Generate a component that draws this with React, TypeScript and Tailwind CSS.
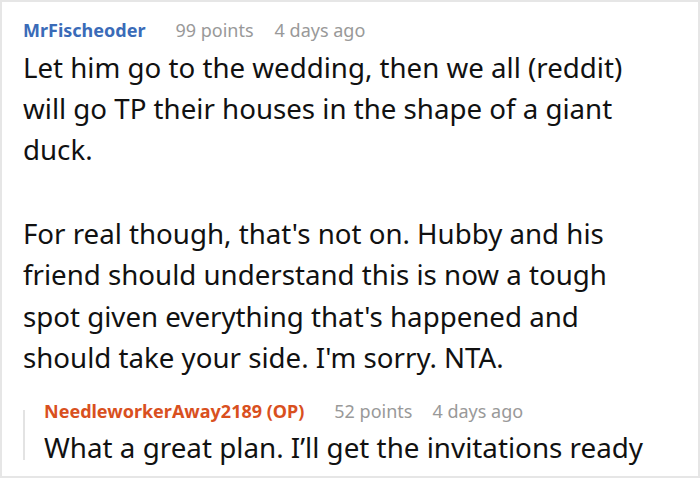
const firstParagraph = [
  'Let him go to the wedding, then we all (reddit)',
  'will go TP their houses in the shape of a giant',
  'duck.',
];

const secondParagraph = [
  'For real though, that\'s not on. Hubby and his',
  'friend should understand this is now a tough',
  'spot given everything that\'s happened and',
  'should take your side. I\'m sorry. NTA.',
];

export default function App() {
  return (
    <div
      className="w-[700px] h-[478px] overflow-hidden bg-white border-2 border-[#e6e6e6] pl-[21px] pt-[16px]"
      style={{ fontFamily: '"Noto Sans", "Open Sans", sans-serif' }}
    >
      {/* Comment header */}
      <div className="flex items-baseline text-[18px] leading-[24px] whitespace-nowrap">
        <span className="font-bold text-[#3a6bb8]">MrFischeoder</span>
        <span className="ml-[30px] text-[#999999]">99 points</span>
        <span className="ml-[21px] text-[#999999]">4 days ago</span>
      </div>

      {/* Comment body */}
      <div className="mt-[4.5px] text-[28px] leading-[41.3px] text-[#111111] whitespace-nowrap origin-left scale-x-[0.988]">
        <div>
          {firstParagraph.map((line) => (
            <div key={line}>{line}</div>
          ))}
        </div>
        <div className="mt-[42.7px]">
          {secondParagraph.map((line) => (
            <div key={line}>{line}</div>
          ))}
        </div>
      </div>

      {/* Reply */}
      <div className="flex mt-[20.7px] [font-stretch:condensed]">
        <div className="w-[2px] h-[50px] mt-[11px] bg-[#e3e3e3] shrink-0" />
        <div className="ml-[19px]">
          <div className="flex items-baseline text-[18px] leading-[24px] whitespace-nowrap">
            <span className="font-bold text-[#d9501e]">NeedleworkerAway2189 (OP)</span>
            <span className="ml-[30px] text-[#999999]">52 points</span>
            <span className="ml-[20px] text-[#999999]">4 days ago</span>
          </div>
          <p className="mt-[4px] text-[28px] leading-[40px] text-[#111111] whitespace-nowrap origin-left scale-x-[0.992]">
            What a great plan. I’ll get the invitations ready
          </p>
        </div>
      </div>
    </div>
  );
}
